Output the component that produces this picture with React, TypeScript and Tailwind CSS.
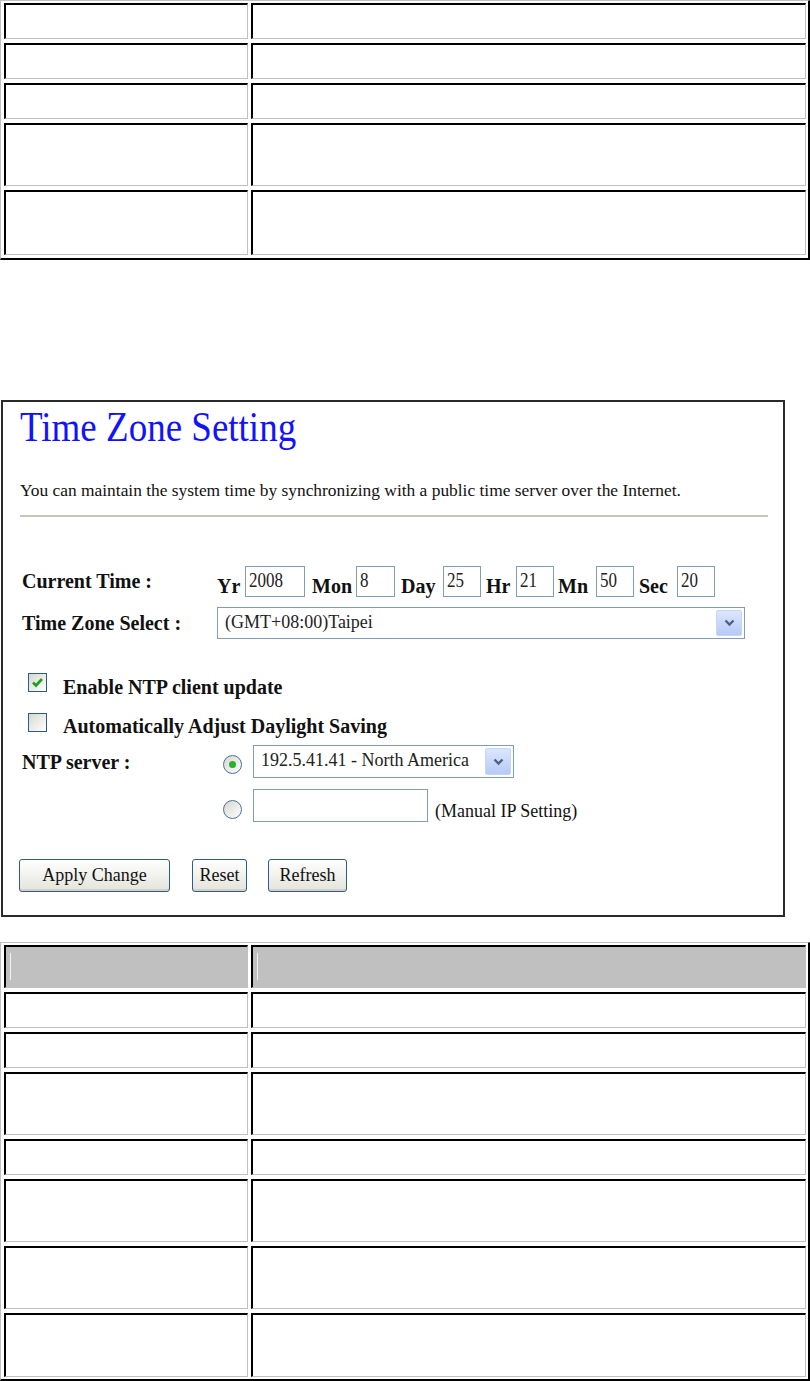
import React from "react";

// cell heights of the two description tables (px)
const TOP_ROWS = [36, 36, 36, 63, 65];
const BOTTOM_ROWS = [36, 36, 63, 36, 63, 63, 64];

function Cell({height, header, wide}: {height: number; header?: boolean; wide?: boolean}) {
	return (
		<div
			className={`${wide ? "flex-1" : "w-[244px]"} border-t-2 border-l-2 border-b border-r border-t-black border-l-black border-b-[#c0c0c0] border-r-[#c0c0c0] ${header ? "bg-[#c0c0c0]" : "bg-white"}`}
			style={{height}}
		>
			{header && <div className="ml-[4px] mt-[6px] h-[27px] w-px bg-white/80" />}
		</div>
	);
}

function DocTable({rows, header, className}: {rows: number[]; header?: boolean; className?: string}) {
	return (
		<div className={`border-t border-l border-b-2 border-r-2 border-t-[#c0c0c0] border-l-[#c0c0c0] border-b-black border-r-black pt-[2px] pl-[3px] pr-[2px] ${className ?? ""}`}>
			<div className="flex flex-col gap-[4px]">
				{header && (
					<div className="flex gap-[3px]">
						<Cell height={43} header />
						<Cell height={43} header wide />
					</div>
				)}
				{rows.map((h, i) => (
					<div key={i} className="flex gap-[3px]">
						<Cell height={h} />
						<Cell height={h} wide />
					</div>
				))}
			</div>
		</div>
	);
}

function TextBox({value, width, height}: {value?: string; width: number; height: number}) {
	return (
		<div
			className="border border-[#7f9db9] bg-white pl-[3px] pt-[2px] text-[17px] leading-[20px] text-[#222]"
			style={{width, height}}
		>
			{value && <span className="inline-block origin-top scale-y-[1.2]">{value}</span>}
		</div>
	);
}

function Chevron() {
	return (
		<svg width="11" height="8" viewBox="0 0 11 8">
			<path d="M1.5 1.5 L5.5 5.5 L9.5 1.5" fill="none" stroke="#4d6185" strokeWidth="2.4" />
		</svg>
	);
}

function Select({value, width, height}: {value: string; width: number; height: number}) {
	return (
		<div className="flex items-stretch border border-[#7f9db9] bg-white" style={{width, height}}>
			<div className="flex-1 pl-[7px] text-[18px] leading-[29px] text-[#222] whitespace-nowrap overflow-hidden">
				{value}
			</div>
			<div className="m-[2px] w-[26px] rounded-[2px] border border-[#c8d6f6] bg-linear-to-b from-[#dce6fd] to-[#b6caf5] flex items-center justify-center">
				<Chevron />
			</div>
		</div>
	);
}

function CheckBox({checked}: {checked?: boolean}) {
	return (
		<div className="w-[19px] h-[19px] border border-[#2a5c8c] bg-linear-to-br from-[#d8d8d2] to-white flex items-center justify-center">
			{checked && (
				<svg width="13" height="11" viewBox="0 0 13 11">
					<path d="M2 5.5 L5 8.5 L11 2" fill="none" stroke="#21a121" strokeWidth="2.6" />
				</svg>
			)}
		</div>
	);
}

function Radio({checked}: {checked?: boolean}) {
	return (
		<div className="w-[19px] h-[19px] rounded-full border border-[#4a6f9a] bg-linear-to-br from-[#d6d6d0] to-white flex items-center justify-center">
			{checked && <div className="w-[7px] h-[7px] rounded-full bg-[#2bb02b]" />}
		</div>
	);
}

function Btn({label, width, className}: {label: string; width: number; className?: string}) {
	return (
		<div
			className={`h-[33px] rounded-[3px] border border-[#2f5a8c] bg-linear-to-b from-white to-[#e4e4dc] shadow-[inset_0_-2px_0_#d6d0c5] flex items-center justify-center text-[18px] text-[#111] ${className ?? ""}`}
			style={{width}}
		>
			{label}
		</div>
	);
}

function TimeField({label, labelWidth, value, width, gap}: {label: string; labelWidth: number; value: string; width: number; gap: number}) {
	return (
		<div className="flex items-end" style={{marginLeft: gap}}>
			<span className="font-bold text-[20px] leading-[22px]" style={{width: labelWidth}}>{label}</span>
			<TextBox value={value} width={width} height={31} />
		</div>
	);
}

function TimeZonePanel() {
	return (
		<div className="mt-[140px] ml-[1px] w-[784px] h-[517px] border-2 border-[#2a2a2a] bg-white text-[#111]">
			<div className="mt-[6px] pl-[17px] text-[37px] leading-[44px] text-[#1212ff]">
				<span className="inline-block origin-bottom scale-y-[1.12]">Time Zone Setting</span>
			</div>
			<div className="mt-[28px] pl-[17px] text-[17.4px] leading-[20px]">
				You can maintain the system time by synchronizing with a public time server over the Internet.
			</div>
			<div className="mt-[15px] ml-[17px] mr-[15px] h-[2px] bg-[#cac4ba]" />

			<div className="pl-[19px]">
				{/* Current time */}
				<div className="mt-[49px] flex h-[31px]">
					<div className="w-[195px] mt-[4px] font-bold text-[20px] leading-[22px]">Current Time :</div>
					<div className="flex">
						<TimeField label="Yr" labelWidth={28} value="2008" width={60} gap={0} />
						<TimeField label="Mon" labelWidth={44} value="8" width={39} gap={7} />
						<TimeField label="Day" labelWidth={42} value="25" width={38} gap={6} />
						<TimeField label="Hr" labelWidth={30} value="21" width={38} gap={5} />
						<TimeField label="Mn" labelWidth={38} value="50" width={38} gap={4} />
						<TimeField label="Sec" labelWidth={38} value="20" width={38} gap={5} />
					</div>
				</div>

				{/* Time zone */}
				<div className="mt-[10px] flex h-[32px]">
					<div className="w-[195px] mt-[5px] font-bold text-[20px] leading-[22px]">Time Zone Select :</div>
					<Select value="(GMT+08:00)Taipei" width={528} height={32} />
				</div>

				{/* checkboxes */}
				<div className="mt-[34px] ml-[6px] flex h-[25px]">
					<CheckBox checked />
					<span className="ml-[16px] mt-[3px] font-bold text-[20px] leading-[22px]">Enable NTP client update</span>
				</div>
				<div className="mt-[15px] ml-[6px] flex h-[25px]">
					<CheckBox />
					<span className="ml-[16px] mt-[2px] font-bold text-[20px] leading-[22px]">Automatically Adjust Daylight Saving</span>
				</div>

				{/* NTP server */}
				<div className="mt-[7px] flex h-[33px]">
					<div className="w-[201px] mt-[6px] font-bold text-[20px] leading-[22px]">NTP server :</div>
					<div className="mt-[10px]"><Radio checked /></div>
					<div className="ml-[11px]">
						<Select value="192.5.41.41 - North America" width={261} height={33} />
					</div>
				</div>
				<div className="mt-[11px] flex h-[33px]">
					<div className="w-[201px]" />
					<div className="mt-[11px]"><Radio /></div>
					<div className="ml-[11px]"><TextBox width={175} height={33} /></div>
					<span className="ml-[7px] mt-[11px] text-[18px] leading-[22px]">(Manual IP Setting)</span>
				</div>

				{/* buttons */}
				<div className="mt-[37px] -ml-[3px] flex">
					<Btn label="Apply Change" width={151} />
					<Btn label="Reset" width={55} className="ml-[22px]" />
					<Btn label="Refresh" width={79} className="ml-[21px]" />
				</div>
			</div>
		</div>
	);
}

export default function App() {
	return (
		<div className="w-[810px] h-[1381px] bg-white font-['Liberation_Serif','Times_New_Roman',serif] overflow-hidden">
			<DocTable rows={TOP_ROWS} className="pb-[3px]" />
			<TimeZonePanel />
			<DocTable rows={BOTTOM_ROWS} header className="mt-[25px] pb-[2px]" />
		</div>
	);
}
